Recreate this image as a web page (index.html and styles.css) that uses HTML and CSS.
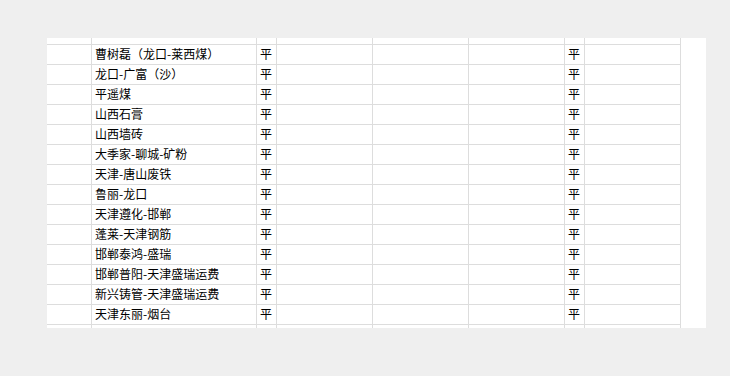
FILE: index.html
```html
<!DOCTYPE html>
<html lang="zh">
<head>
<meta charset="utf-8">
<title>Sheet</title>
<link rel="stylesheet" href="styles.css">
</head>
<body>
<div class="page">
  <div class="sheet">
    <div class="grid">
      <div class="row"><div class="c"></div><div class="c t"></div><div class="c t"></div><div class="c"></div><div class="c"></div><div class="c"></div><div class="c t"></div><div class="c"></div></div>
      <div class="row"><div class="c"></div><div class="c t">曹树磊（龙口-莱西煤）</div><div class="c t">平</div><div class="c"></div><div class="c"></div><div class="c"></div><div class="c t">平</div><div class="c"></div></div>
      <div class="row"><div class="c"></div><div class="c t">龙口-广富（沙）</div><div class="c t">平</div><div class="c"></div><div class="c"></div><div class="c"></div><div class="c t">平</div><div class="c"></div></div>
      <div class="row"><div class="c"></div><div class="c t">平遥煤</div><div class="c t">平</div><div class="c"></div><div class="c"></div><div class="c"></div><div class="c t">平</div><div class="c"></div></div>
      <div class="row"><div class="c"></div><div class="c t">山西石膏</div><div class="c t">平</div><div class="c"></div><div class="c"></div><div class="c"></div><div class="c t">平</div><div class="c"></div></div>
      <div class="row"><div class="c"></div><div class="c t">山西墙砖</div><div class="c t">平</div><div class="c"></div><div class="c"></div><div class="c"></div><div class="c t">平</div><div class="c"></div></div>
      <div class="row"><div class="c"></div><div class="c t">大季家-聊城-矿粉</div><div class="c t">平</div><div class="c"></div><div class="c"></div><div class="c"></div><div class="c t">平</div><div class="c"></div></div>
      <div class="row"><div class="c"></div><div class="c t">天津-唐山废铁</div><div class="c t">平</div><div class="c"></div><div class="c"></div><div class="c"></div><div class="c t">平</div><div class="c"></div></div>
      <div class="row"><div class="c"></div><div class="c t">鲁丽-龙口</div><div class="c t">平</div><div class="c"></div><div class="c"></div><div class="c"></div><div class="c t">平</div><div class="c"></div></div>
      <div class="row"><div class="c"></div><div class="c t">天津遵化-邯郸</div><div class="c t">平</div><div class="c"></div><div class="c"></div><div class="c"></div><div class="c t">平</div><div class="c"></div></div>
      <div class="row"><div class="c"></div><div class="c t">蓬莱-天津钢筋</div><div class="c t">平</div><div class="c"></div><div class="c"></div><div class="c"></div><div class="c t">平</div><div class="c"></div></div>
      <div class="row"><div class="c"></div><div class="c t">邯郸泰鸿-盛瑞</div><div class="c t">平</div><div class="c"></div><div class="c"></div><div class="c"></div><div class="c t">平</div><div class="c"></div></div>
      <div class="row"><div class="c"></div><div class="c t">邯郸普阳-天津盛瑞运费</div><div class="c t">平</div><div class="c"></div><div class="c"></div><div class="c"></div><div class="c t">平</div><div class="c"></div></div>
      <div class="row"><div class="c"></div><div class="c t">新兴铸管-天津盛瑞运费</div><div class="c t">平</div><div class="c"></div><div class="c"></div><div class="c"></div><div class="c t">平</div><div class="c"></div></div>
      <div class="row"><div class="c"></div><div class="c t">天津东丽-烟台</div><div class="c t">平</div><div class="c"></div><div class="c"></div><div class="c"></div><div class="c t">平</div><div class="c"></div></div>
      <div class="row"><div class="c"></div><div class="c t">莱州-淄博玉菜球</div><div class="c t">借</div><div class="c n">24,449.00</div><div class="c n">25,649.00</div><div class="c n">1,200.00</div><div class="c t">借</div><div class="c n">12,071.00</div></div>
    </div>
  </div>
</div>
</body>
</html>
```

FILE: styles.css
```css
html, body {
  margin: 0;
  padding: 0;
  background: #efefef;
}
.page {
  width: 730px;
  height: 376px;
  padding: 38px 0 0 47px;
  box-sizing: border-box;
}
.sheet {
  width: 659px;
  height: 290px;
  background: #ffffff;
  overflow: hidden;
}
.grid {
  margin-top: -13px;
  display: flex;
  flex-direction: column;
}
.row {
  display: grid;
  grid-template-columns: 45px 165px 20px 96px 96px 96px 20px 96px;
  height: 20px;
}
.c {
  box-sizing: border-box;
  height: 20px;
  border-right: 1px solid #dddddd;
  border-bottom: 1px solid #dddddd;
  font-family: "Noto Sans CJK SC", "Noto Sans", sans-serif;
  font-size: 12px;
  line-height: 15px;
  padding-top: 1px;
  color: #000000;
  white-space: nowrap;
  overflow: hidden;
}
.t {
  padding-left: 3px;
}
.n {
  text-align: right;
  padding-right: 4px;
  font-family: "Liberation Sans", Arial, sans-serif;
}
```
